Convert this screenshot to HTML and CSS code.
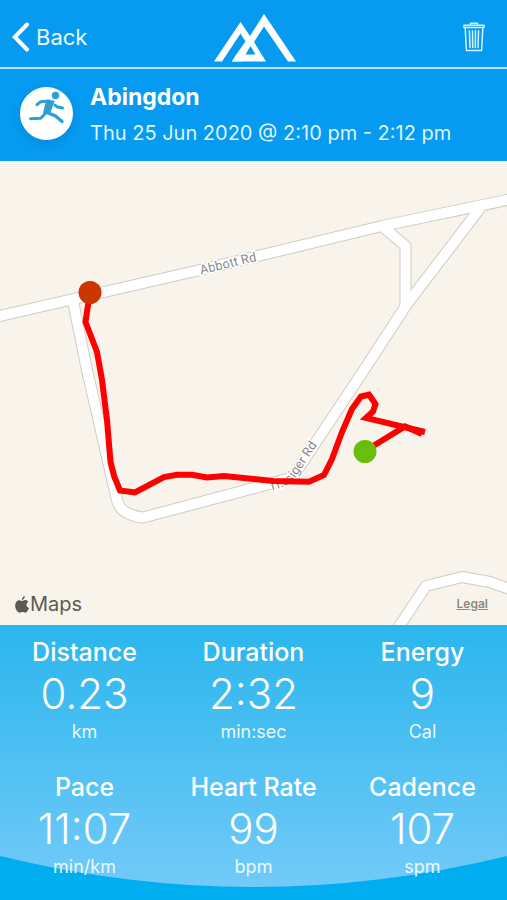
FILE: index.html
```html
<!DOCTYPE html>
<html lang="en">
<head>
<meta charset="utf-8">
<meta name="viewport" content="width=device-width, initial-scale=1">
<title>Abingdon</title>
<link rel="stylesheet" href="styles.css">
</head>
<body>
<header class="bar">
  <a class="back" href="#">
    <svg width="18" height="30" viewBox="0 0 18 30" aria-hidden="true"><path d="M15 2.500 2.800 15 15 27.500" fill="none" stroke="currentColor" stroke-width="4" stroke-linecap="round" stroke-linejoin="miter"/></svg>
    <span>Back</span>
  </a>
  <svg class="logo" width="82" height="48" viewBox="0 0 82 48" aria-hidden="true">
    <path d="M0 47.500 26.500 8 36 22 50 0 82 47.500H74L50 12.500 27.500 47.500 18 47.500 31.500 27.500 26.500 19.500 8 47.500Z" fill="#fff"/>
    <path d="M36 21.500 52 47.500H18L22 41Z" fill="#fff"/>
    <path d="M36.500 32 41.500 40.500H31.500Z" fill="#069af1"/>
  </svg>
  <button class="delete" type="button" aria-label="Delete">
    <svg width="22" height="30" viewBox="0 0 22 30" fill="none" stroke="currentColor" stroke-width="1.500" stroke-linejoin="round" stroke-linecap="round" aria-hidden="true">
      <path d="M1 3.200H21V5.600H1ZM7.500 3V1.200H14.500V3M2.200 5.800 3.400 28.500H18.600L19.800 5.800M6.400 8.800 7 25.500M9.500 8.800 9.700 25.500M12.500 8.800 12.300 25.500M15.600 8.800 15 25.500"/>
    </svg>
  </button>
</header>
<main class="workout">
  <section class="summary">
    <span class="badge">
      <svg width="36" height="33" viewBox="0 0 36 33" fill="none" stroke="#2d9fd5" stroke-linecap="round" stroke-linejoin="round" aria-hidden="true">
        <circle cx="26.500" cy="4.500" r="3.700" fill="#2d9fd5" stroke="none"/>
        <path d="M8 13.700 11.500 10.800 20 10M26 14.200 28.500 16 33.500 17M1.500 27.800 11.500 27.300 15.500 23.500" stroke-width="3"/>
        <path d="M18 21.500 26.500 25 33 30.500" stroke-width="3.400"/>
        <path d="M18 10 24.500 10.500 20.800 20.500 20 22.500 15 22Z" fill="#2d9fd5" stroke-width="2"/>
      </svg>
    </span>
    <div>
      <h1 class="place">Abingdon</h1>
      <p class="when">Thu 25 Jun 2020 @ 2:10 pm - 2:12 pm</p>
    </div>
  </section>
  <section class="map" aria-label="Route map">
    <svg class="map-canvas" viewBox="0 0 507 464" preserveAspectRatio="xMidYMid slice">
      <defs>
        <g id="roads">
          <path d="M-10 157.500 0 155 200 109 382 65 507 39 530 34"/>
          <path d="M73 140 87 209 116 335Q118 346 124 350 133 356 143 356.500L273 322 293 316 300 305 364 209 407 143 478 50 482 44"/>
          <path d="M383 66 405.500 85V147"/>
          <path d="M386 485 400 464 426 425 462 416 490 421 507 427 530 438"/>
        </g>
        <path id="abbott" d="M201 113.500 300 89.500"/>
        <path id="thesiger" d="M270 330 284 326 292 321 300 310 345 242"/>
      </defs>
      <use href="#roads" class="road-edge"/>
      <use href="#roads" class="road-fill"/>
      <text class="road-name"><textPath href="#abbott">Abbott Rd</textPath></text>
      <text class="road-name"><textPath href="#thesiger">Thesiger Rd</textPath></text>
      <path class="route" d="M90 131 85.500 161 97 191 102 219 107 259 110.500 301 114 315 120 329.500 135 331.500 164 316 177 313.700 192 313.700 207 316.500 224 315 273 320 309 320.700 324 314 332 298 342 271 352 248 361 235.500 369 233.700 375.500 243 373 250.500 366 257 425 271"/>
      <path class="route" d="M365 290 405 265.500 422 273"/>
      <circle cx="90" cy="131.500" r="11.500" fill="#cb3500"/>
      <circle cx="365" cy="290.500" r="11.500" fill="#69bd0c"/>
    </svg>
    <div class="map-footer">
      <span class="provider"><svg width="14" height="17" viewBox="0 0 14 17" fill="currentColor" aria-hidden="true"><path d="M9.800 0C10 1.700 8.600 3.800 6.900 3.900 6.800 2.200 8.200.3 9.800 0ZM7.200 5C8 5 8.700 4.100 10.100 4.100 11.400 4.100 12.600 4.700 13.300 5.700 10.600 7.300 11.100 10.900 14 12 13.300 14 11.800 16.700 10.200 16.700 9.200 16.700 8.700 16.100 7.500 16.100 6.300 16.100 5.700 16.700 4.800 16.700 2.500 16.700.2 12.800.2 9.700.2 6.200 2.200 4.200 4.400 4.200 5.700 4.200 6.500 5 7.200 5Z"/></svg>Maps</span>
      <a class="legal" href="#">Legal</a>
    </div>
  </section>
  <section class="stats">
    <svg class="wave" viewBox="0 0 507 275" preserveAspectRatio="none" aria-hidden="true">
      <defs><linearGradient id="sky" x1="0" y1="0" x2="0" y2="1"><stop offset="0" stop-color="#2ab6ee"/><stop offset="1" stop-color="#72caf8"/></linearGradient></defs>
      <path d="M0 0H507V231Q253.500 293 0 231Z" fill="url(#sky)"/>
    </svg>
    <div class="stat"><h2>Distance</h2><strong>0.23</strong><span>km</span></div>
    <div class="stat"><h2>Duration</h2><strong>2:32</strong><span>min:sec</span></div>
    <div class="stat"><h2>Energy</h2><strong>9</strong><span>Cal</span></div>
    <div class="stat"><h2>Pace</h2><strong>11:07</strong><span>min/km</span></div>
    <div class="stat"><h2>Heart Rate</h2><strong>99</strong><span>bpm</span></div>
    <div class="stat"><h2>Cadence</h2><strong>107</strong><span>spm</span></div>
  </section>
</main>
</body>
</html>
```
FILE: styles.css
```css
* { box-sizing: border-box; }

body {
  display: flex;
  flex-direction: column;
  min-height: 100vh;
  margin: 0;
  background: #00adee;
  color: #fff;
  font-family: Inter, "Liberation Sans", sans-serif;
}

h1, h2, p { margin: 0; }

.bar {
  display: grid;
  grid-template-columns: 1fr auto 1fr;
  align-items: center;
  padding: 7px 12px 0;
  height: 69px;
  background: #069af1;
  border-bottom: 2px solid #b5e2fd;
}

.back {
  display: flex;
  align-items: center;
  gap: 6px;
  color: #e9f8ff;
  font-size: 22px;
  line-height: 28px;
  text-decoration: none;
}

.back svg { color: #fff; }

.logo { margin: 2px 0 0 2px; }

.delete {
  justify-self: end;
  display: flex;
  padding: 0;
  margin-right: 10px;
  border: 0;
  background: none;
  color: #d9f2ff;
}

.workout {
  flex: 1;
  display: flex;
  flex-direction: column;
}

.summary {
  display: flex;
  align-items: center;
  gap: 17px;
  height: 92px;
  padding: 0 20px 3px;
  background: #069af1;
}

.badge {
  display: flex;
  flex: none;
  justify-content: center;
  width: 53px;
  height: 53px;
  padding-top: 4px;
  border-radius: 50%;
  background: #fff;
  box-shadow: 0 3px 8px #0369b350;
}

.place {
  font-size: 23px;
  font-weight: 700;
  line-height: 32px;
}

.when {
  margin-top: 6px;
  color: #dff4ff;
  font-size: 20px;
  line-height: 28px;
}

.map {
  position: relative;
  flex: 1;
  display: flex;
  align-items: flex-end;
  min-height: 300px;
  overflow: hidden;
  background: #f8f4ec;
}

.map-canvas {
  position: absolute;
  inset: 0;
  width: 100%;
  height: 100%;
}

.road-edge {
  fill: none;
  stroke: #cfccc5;
  stroke-width: 12px;
  stroke-linejoin: round;
}

.road-fill {
  fill: none;
  stroke: #fff;
  stroke-width: 10px;
  stroke-linejoin: round;
}

.road-name {
  fill: #8a8a8a;
  stroke: #fff;
  stroke-width: 3px;
  paint-order: stroke;
  font-family: Roboto, sans-serif;
  font-size: 13px;
}

.route {
  fill: none;
  stroke: #fe0000;
  stroke-width: 6px;
}

.map-footer {
  position: relative;
  flex: 1;
  display: flex;
  align-items: center;
  justify-content: space-between;
  padding: 0 19px 7px 15px;
}

.provider {
  display: flex;
  align-items: center;
  gap: 1px;
  color: #5c5a54;
  font-size: 20px;
  line-height: 28px;
}

.legal {
  color: #8b8983;
  font-size: 12px;
  font-weight: 600;
  line-height: 20px;
}

.stats {
  position: relative;
  display: grid;
  grid-template-columns: repeat(3, 1fr);
  row-gap: 31px;
  padding: 13px 0 23px;
}

.wave {
  position: absolute;
  inset: 0;
  width: 100%;
  height: 100%;
}

.stat {
  position: relative;
  display: flex;
  flex-direction: column;
  align-items: center;
}

.stat h2 {
  font-size: 25px;
  font-weight: 500;
  line-height: 28px;
}

.stat strong {
  font-size: 42px;
  font-weight: 300;
  line-height: 56px;
}

.stat span {
  color: #eaf8ff;
  font-size: 18px;
  line-height: 20px;
}
```
